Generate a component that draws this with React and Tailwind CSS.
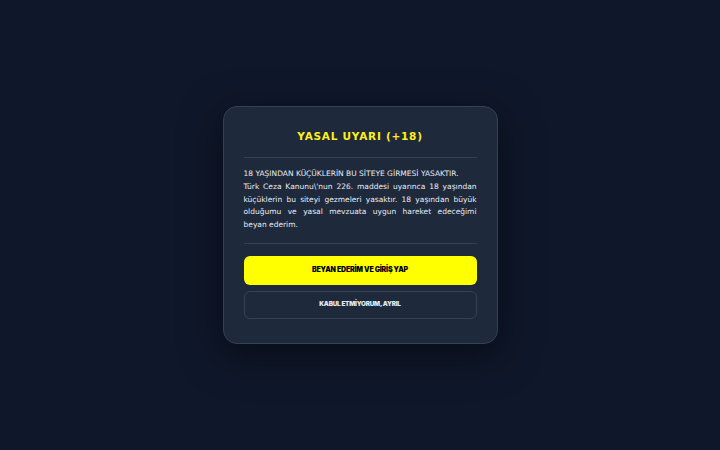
import React from 'react';

export default function App() {
    return (
        <div className="w-full h-[450px] bg-[#0f172a] flex items-center justify-center" style={{ fontFamily: '"DejaVu Sans", sans-serif' }}>
            <div className="w-[275px] bg-[#1e293b] border border-[#334155] rounded-[14px] shadow-[0_10px_40px_rgba(0,0,0,0.5)] px-5 pt-[21px] pb-6">
                <h1 className="text-center text-[10.5px] font-bold tracking-[0.75px] text-[#ffef1a] leading-[16px]">YASAL UYARI (+18)</h1>
                <div className="h-px bg-[#334155] mt-[13px]"></div>
                <div className="text-[7.5px] leading-[12.8px] text-[#e8edf3] text-justify mt-[10px]">
                    <p>18 YAŞINDAN KÜÇÜKLERİN BU SİTEYE GİRMESİ YASAKTIR.</p>
                    <p>Türk Ceza Kanunu\'nun 226. maddesi uyarınca 18 yaşından küçüklerin bu siteyi gezmeleri yasaktır. 18 yaşından büyük olduğumu ve yasal mevzuata uygun hareket edeceğimi beyan ederim.</p>
                </div>
                <div className="h-px bg-[#334155] mt-[11px]"></div>
                <div className="flex flex-col gap-[6px] mt-3" style={{ fontFamily: 'Inter, sans-serif' }}>
                    <button className="h-[29px] w-full rounded-[6px] bg-[#ffff00] text-black text-[7px] font-black tracking-[-0.2px]">BEYAN EDERİM VE GİRİŞ YAP</button>
                    <button className="h-[28px] w-full rounded-[6px] border border-[#334155] text-[#e2e8f0] text-[6.3px] font-black tracking-[-0.2px]">KABUL ETMİYORUM, AYRIL</button>
                </div>
            </div>
        </div>
    );
}
